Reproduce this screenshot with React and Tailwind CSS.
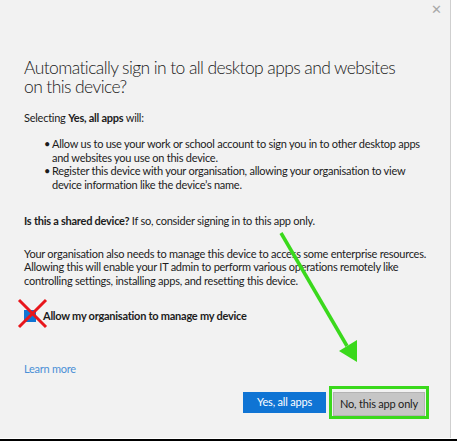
import React from 'react';

const font = { fontFamily: '"Segoe UI", Lato, "Noto Sans", sans-serif' };
const body = 'text-[11px] leading-[13.5px] tracking-[-0.25px] whitespace-nowrap';

// Annotation marks drawn on top of the dialog: green arrow pointing at the
// second button, and the red cross over the checkbox.
const Arrow = () => (
  <svg className="absolute left-0 top-0 pointer-events-none" width="457" height="444">
    <line x1="281" y1="233" x2="347" y2="346" stroke="#3ad91c" strokeWidth="3.5" />
    <polygon points="339,351 357,340 357,362" fill="#3ad91c" />
  </svg>
);

const RedCross = () => (
  <svg className="absolute left-[17px] top-[298px] pointer-events-none" width="31" height="31">
    <line x1="2" y1="2" x2="29" y2="29" stroke="#e8161b" strokeWidth="3" />
    <line x1="29" y1="2" x2="2" y2="29" stroke="#e8161b" strokeWidth="3" />
  </svg>
);

const Bullet = ({ children }) => (
  <li className="flex">
    <span className="w-[28px] shrink-0 pl-[20px]">•</span>
    <span>{children}</span>
  </li>
);

const App = () => {
  return (
    <div className="relative w-[457px] h-[444px] bg-white overflow-hidden" style={font}>
      <div className="w-[451px] h-[438px] bg-[#f2f2f2] border-r border-[#cfcfcf] flex flex-col px-[24px] text-[#1c1c1c]">
        {/* close */}
        <div className="flex justify-end -mr-[16px] pt-[3px] h-[58px]">
          <span className="text-[#a8a8a8] text-[13px] leading-none">✕</span>
        </div>

        <h1 className="text-[17.5px] font-light leading-[19px] tracking-[-0.6px] text-[#202020] whitespace-nowrap">
          Automatically sign in to all desktop apps and websites
          <br />
          on this device?
        </h1>

        <p className={`${body} mt-[15px]`}>
          Selecting <b>Yes, all apps</b> will:
        </p>
        <ul className={`${body} mt-[12.5px]`}>
          <Bullet>
            Allow us to use your work or school account to sign you in to other desktop apps
            <br />
            and websites you use on this device.
          </Bullet>
          <Bullet>
            Register this device with your organisation, allowing your organisation to view
            <br />
            device information like the device’s name.
          </Bullet>
        </ul>

        <p className={`${body} mt-[23px]`}>
          <b>Is this a shared device?</b> If so, consider signing in to this app only.
        </p>

        <p className={`${body} mt-[19px]`}>
          Your organisation also needs to manage this device to access some enterprise resources.
          <br />
          Allowing this will enable your IT admin to perform various operations remotely like
          <br />
          controlling settings, installing apps, and resetting this device.
        </p>

        <div className="flex items-center gap-[7px] mt-[22px] h-[14px]">
          <span className="w-[12px] h-[12px] bg-[#0f74d4]" />
          <span className={`${body} font-bold`}>Allow my organisation to manage my device</span>
        </div>

        <a className={`${body} text-[#4a8fd6] mt-[39px]`}>Learn more</a>

        <div className="flex justify-end items-center gap-[3px] mt-[10px] -mr-[3px]">
          <button className="w-[83px] h-[21px] bg-[#0f74d4] text-white text-[11px] tracking-[-0.2px]">
            Yes, all apps
          </button>
          <div className="w-[100px] h-[33px] border-[3px] border-[#3ad91c] pl-[1px] pt-[1px]">
            <button className="w-[92px] h-[24px] bg-[#c6c6c6] text-[#1c1c1c] text-[11px] tracking-[-0.2px] border border-[#b3b3b3]">
              No, this app only
            </button>
          </div>
        </div>
      </div>
      <div className="h-[1px] bg-white" />
      <div className="h-[2px] bg-black" />

      <RedCross />
      <Arrow />
    </div>
  );
};

export default App;
